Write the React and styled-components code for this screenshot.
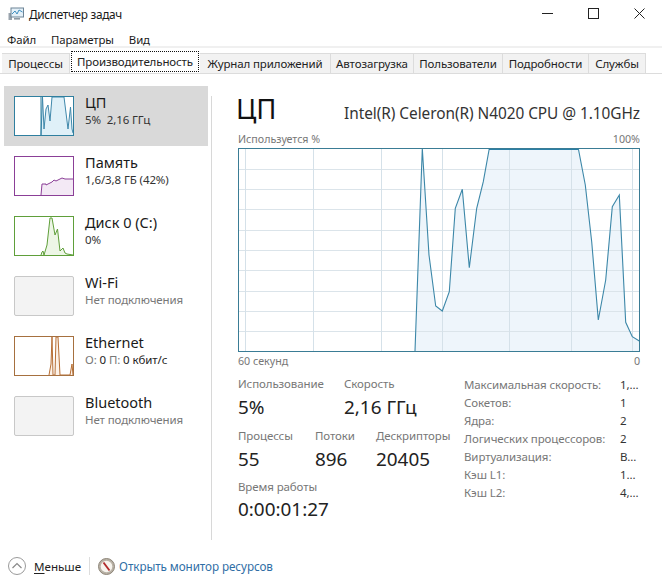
import React from 'react'
import styled, { createGlobalStyle } from 'styled-components'

const GlobalStyle = createGlobalStyle`
  html, body { margin: 0; padding: 0; background: #fff; }
  body { font-family: "Noto Sans", "Open Sans", sans-serif; color: #1a1a1a; overflow: hidden; }
`

const Win = styled.div`
  width: 662px;
  height: 587px;
  display: flex;
  flex-direction: column;
  overflow: hidden;
`
const TitleBar = styled.div`
  height: 29px;
  box-sizing: border-box;
  padding: 0 0 2px 8px;
  display: flex;
  align-items: center;
  font-size: 11.8px;
  letter-spacing: -0.3px;
`
const TitleText = styled.span`
  margin-left: 5px;
  flex: 1;
`
const WinBtn = styled.div`
  width: 46px;
  height: 27px;
  display: flex;
  align-items: center;
  justify-content: center;
`
const MenuBar = styled.div`
  height: 19px;
  box-sizing: border-box;
  padding: 3px 0 0 7px;
  display: flex;
  gap: 15px;
  align-items: center;
  font-size: 11.4px;
  letter-spacing: -0.1px;
  border-bottom: 2px solid #f0f0f0;
`
const TabStrip = styled.div`
  margin-top: 5px;
  height: 20px;
  padding-left: 2px;
  display: flex;
  align-items: flex-end;
  border-bottom: 1px solid #dcdcdc;
`
const Tab = styled.div`
  width: ${p => p.$w}px;
  height: ${p => (p.$active ? 21 : 20)}px;
  box-sizing: border-box;
  display: flex;
  align-items: center;
  justify-content: center;
  font-size: 11.5px;
  letter-spacing: -0.12px;
  white-space: nowrap;
  background: ${p => (p.$active ? '#fff' : '#f2f2f2')};
  border: 1px solid #dcdcdc;
  border-left-width: ${p => (p.$active ? 1 : 0)}px;
  border-bottom: none;
  color: #222;
  ${p => p.$active && 'border: 1px dotted #111; margin: 0 1px 1px; height: 21px;'}
`
const Body = styled.div`
  flex: 1;
  display: flex;
  padding: 12px 0 0 4px;
  min-height: 0;
`
const Side = styled.div`
  width: 204px;
  display: flex;
  flex-direction: column;
`
const SideRow = styled.div`
  height: 60px;
  display: flex;
  align-items: center;
  padding-left: 10px;
  gap: 11px;
  background: ${p => (p.$active ? '#d9d9d9' : 'transparent')};
`
const Thumb = styled.div`
  width: 60px;
  height: 40px;
  box-sizing: border-box;
  background: ${p => (p.$off ? '#f3f3f3' : '#fff')};
  border: 1px solid ${p => p.$color};
  border-radius: ${p => (p.$off ? 2 : 0)}px;
  overflow: hidden;
  flex: none;
`
const ThumbSvg = styled.svg`
  display: block;
  width: 58px;
  height: 38px;
`
const SideText = styled.div`
  display: flex;
  flex-direction: column;
  margin-top: -13px;
`
const SideName = styled.div`
  font-size: 14.5px;
  line-height: 19px;
  color: #1a1a1a;
`
const SideSub = styled.div`
  font-size: 11.5px;
  line-height: 15px;
  letter-spacing: -0.1px;
  color: ${p => (p.$grey ? '#777' : '#333')};
  b { font-weight: 400; color: #222; }
  i { font-style: normal; color: #777; }
`
const Divider = styled.div`
  width: 1px;
  margin: 10px 26px 0 3px;
  height: 444px;
  background: #d8d8d8;
`
const Main = styled.div`
  width: 402px;
  display: flex;
  flex-direction: column;
`
const Heading = styled.div`
  display: flex;
  justify-content: space-between;
  align-items: baseline;
  height: 46px;
`
const BigTitle = styled.div`
  font-size: 27.5px;
  line-height: 44px;
  margin: 1px 0 0 -2px;
  color: #111;
`
const CpuName = styled.div`
  font-size: 15.4px;
  letter-spacing: -0.05px;
  color: #333;
`
const AxisRow = styled.div`
  display: flex;
  justify-content: space-between;
  font-size: 10.7px;
  line-height: 14px;
  color: #777;
`
const GraphSvg = styled.svg`
  display: block;
  width: 402px;
  height: 204px;
  margin: 2px 0 2px;
`
const Stats = styled.div`
  display: flex;
  margin-top: 8px;
`
const StatsLeft = styled.div`
  width: 226px;
`
const StatRow = styled.div`
  display: flex;
  height: ${p => p.$h || 52}px;
`
const Stat = styled.div`
  width: ${p => p.$w}px;
  white-space: nowrap;
`
const StatLabel = styled.div`
  font-size: 11.5px;
  line-height: 16px;
  letter-spacing: -0.1px;
  color: #777;
`
const StatValue = styled.div`
  font-size: 18.9px;
  line-height: ${p => p.$lh || 31}px;
  color: #222;
`
const Specs = styled.div`
  flex: 1;
  display: grid;
  grid-template-columns: 156px 1fr;
  grid-auto-rows: 18px;
  align-self: start;
  padding-top: 1px;
  font-size: 11.5px;
  line-height: 16px;
  letter-spacing: -0.1px;
  color: #777;
  span:nth-child(even) { color: #333; }
`
const Footer = styled.div`
  height: 47px;
  box-sizing: border-box;
  padding: 5px 0 0 8px;
  display: flex;
  align-items: center;
  font-size: 11.6px;
`
const LessLabel = styled.span`
  margin-left: 8px;
  color: #222;
  u { text-underline-offset: 2px; }
`
const FootSep = styled.div`
  width: 1px;
  height: 18px;
  margin: 0 8px;
  background: #ddd;
`
const ResLink = styled.a`
  margin-left: 4px;
  font-size: 11.7px;
  letter-spacing: -0.08px;
  color: #2f6ea5;
`

const tabs = [
  ['Процессы', 68],
  ['Производительность', 130, true],
  ['Журнал приложений', 131],
  ['Автозагрузка', 83],
  ['Пользователи', 89],
  ['Подробности', 86],
  ['Службы', 57],
]

const thumbs = {
  cpu: { color: '#2f7f9f', fill: '#dff0f8', line: '#3f88ab', divider: 26,
    pts: '26,38 27.5,0 29,32 31,12 33,8 35,24 37,0 49,0 53,32 55.5,10 57,32 58,36' },
  mem: { color: '#8b3f97', fill: '#f3e9f5', line: '#8b3f97',
    pts: '26,38 27,27 31,27 31,28 37,25 39,23 41,24 47,21 50,22 58,22' },
  disk: { color: '#5f9f3a', fill: '#edf6e6', line: '#5f9f3a',
    pts: '26,38 27,35 28,34 29,38 32,28 35,1 37,1 40,18 42.5,12 45,34 48,31 50,36 52,37 58,38' },
  eth: { color: '#a6703f', fill: '#fdf2e8', line: '#b76e35',
    pts: '34,38 36,27 37,0 38,38 40,38 41,0 43,0 45,38 55,38 57,27 58,38' },
}

function Spark({ kind }) {
  const t = thumbs[kind]
  return (
    <Thumb $color={t.color}>
      <ThumbSvg viewBox="0 0 58 38">
        <polygon points={`${t.pts} 58,38`} fill={t.fill} />
        <polyline points={t.pts} fill="none" stroke={t.line} strokeWidth="1" />
        {t.divider && <line x1={t.divider} x2={t.divider} y1="0" y2="38" stroke={t.color} strokeWidth="1" />}
      </ThumbSvg>
    </Thumb>
  )
}

// координаты графика снял со скриншота
const cpuLine = [
  [177, 203], [184.3, 0.5], [191, 107], [197.7, 158], [204.3, 163], [211.3, 143.7], [217.3, 60.3],
  [224.3, 41.3], [231.3, 119.7], [238.7, 60.3], [245.3, 33.7], [251.3, 0.5], [340.3, 0.5], [347.3, 37],
  [353.7, 93.7], [360.3, 172], [367.7, 132], [374.3, 58.7], [381.3, 47], [387.7, 174.3], [394.3, 188.7], [401.3, 193],
]
const hGrid = [21.5, 41.5, 61.5, 82.5, 102.5, 122.5, 143.5, 163.5, 183.5]
const vGrid = [7.5, 75.5, 143.5, 204.5, 271.5, 333.5, 394.5]

function CpuGraph() {
  const pts = cpuLine.map(p => p.join(',')).join(' ')
  return (
    <GraphSvg viewBox="0 0 402 204">
      <polygon points={`${pts} 401.3,203`} fill="#eef5fb" />
      {hGrid.map(y => <line key={y} x1="1" x2="401" y1={y} y2={y} stroke="#dbe4ea" />)}
      {vGrid.map(x => <line key={x} x1={x} x2={x} y1="1" y2="203" stroke="#d5e1e9" />)}
      <polyline points={pts} fill="none" stroke="#3c87a8" strokeWidth="1.1" />
      <line x1="251" x2="340" y1="1" y2="1" stroke="#2a7fa6" strokeWidth="2" />
      <rect x="0.5" y="0.5" width="401" height="203" fill="none" stroke="#3a7c95" />
    </GraphSvg>
  )
}

function AppIcon() {
  return (
    <svg width="16" height="16" viewBox="0 0 16 16">
      <rect x="0.5" y="7" width="3.5" height="7" fill="#9aa4ad" />
      <rect x="3" y="2" width="12.5" height="9" fill="#e4f0f8" stroke="#6d8496" />
      <polyline points="4,8 7,5 9,8 11,4 14.5,6" fill="none" stroke="#3f8fc0" />
      <rect x="6" y="12" width="6" height="1.6" fill="#8d99a3" />
    </svg>
  )
}

export default function App() {
  return (
    <Win>
      <GlobalStyle />
      <TitleBar>
        <AppIcon />
        <TitleText>Диспетчер задач</TitleText>
        <WinBtn>
          <svg width="11" height="11" viewBox="0 0 11 11"><line x1="0" x2="11" y1="5.5" y2="5.5" stroke="#222" /></svg>
        </WinBtn>
        <WinBtn>
          <svg width="11" height="11" viewBox="0 0 11 11"><rect x="0.5" y="0.5" width="10" height="10" fill="none" stroke="#222" /></svg>
        </WinBtn>
        <WinBtn>
          <svg width="11" height="11" viewBox="0 0 11 11"><path d="M0.5 0.5 L10.5 10.5 M10.5 0.5 L0.5 10.5" stroke="#222" fill="none" /></svg>
        </WinBtn>
      </TitleBar>
      <MenuBar>
        <span>Файл</span>
        <span>Параметры</span>
        <span>Вид</span>
      </MenuBar>
      <TabStrip>
        {tabs.map(([name, w, active]) => (
          <Tab key={name} $w={active ? w - 2 : w} $active={active}>{name}</Tab>
        ))}
      </TabStrip>
      <Body>
        <Side>
          <SideRow $active>
            <Spark kind="cpu" />
            <SideText><SideName>ЦП</SideName><SideSub>5%&nbsp; 2,16 ГГц</SideSub></SideText>
          </SideRow>
          <SideRow>
            <Spark kind="mem" />
            <SideText><SideName>Память</SideName><SideSub>1,6/3,8 ГБ (42%)</SideSub></SideText>
          </SideRow>
          <SideRow>
            <Spark kind="disk" />
            <SideText><SideName>Диск 0 (C:)</SideName><SideSub>0%</SideSub></SideText>
          </SideRow>
          <SideRow>
            <Thumb $off $color="#c8c8c8" />
            <SideText><SideName>Wi-Fi</SideName><SideSub $grey>Нет подключения</SideSub></SideText>
          </SideRow>
          <SideRow>
            <Spark kind="eth" />
            <SideText><SideName>Ethernet</SideName><SideSub><i>О:</i> <b>0</b> <i>П:</i> <b>0 кбит/с</b></SideSub></SideText>
          </SideRow>
          <SideRow>
            <Thumb $off $color="#c8c8c8" />
            <SideText><SideName>Bluetooth</SideName><SideSub $grey>Нет подключения</SideSub></SideText>
          </SideRow>
        </Side>
        <Divider />
        <Main>
          <Heading>
            <BigTitle>ЦП</BigTitle>
            <CpuName>Intel(R) Celeron(R) N4020 CPU @ 1.10GHz</CpuName>
          </Heading>
          <AxisRow><span>Используется %</span><span>100%</span></AxisRow>
          <CpuGraph />
          <AxisRow><span>60 секунд</span><span>0</span></AxisRow>
          <Stats>
            <StatsLeft>
              <StatRow>
                <Stat $w={106}><StatLabel>Использование</StatLabel><StatValue>5%</StatValue></Stat>
                <Stat $w={120}><StatLabel>Скорость</StatLabel><StatValue>2,16 ГГц</StatValue></Stat>
              </StatRow>
              <StatRow $h={51}>
                <Stat $w={77}><StatLabel>Процессы</StatLabel><StatValue>55</StatValue></Stat>
                <Stat $w={61}><StatLabel>Потоки</StatLabel><StatValue>896</StatValue></Stat>
                <Stat $w={88}><StatLabel>Дескрипторы</StatLabel><StatValue>20405</StatValue></Stat>
              </StatRow>
              <StatRow>
                <Stat $w={200}><StatLabel>Время работы</StatLabel><StatValue $lh={29}>0:00:01:27</StatValue></Stat>
              </StatRow>
            </StatsLeft>
            <Specs>
              <span>Максимальная скорость:</span><span>1,...</span>
              <span>Сокетов:</span><span>1</span>
              <span>Ядра:</span><span>2</span>
              <span>Логических процессоров:</span><span>2</span>
              <span>Виртуализация:</span><span>В...</span>
              <span>Кэш L1:</span><span>1...</span>
              <span>Кэш L2:</span><span>4,...</span>
            </Specs>
          </Stats>
        </Main>
      </Body>
      <Footer>
        <svg width="18" height="18" viewBox="0 0 18 18">
          <circle cx="9" cy="9" r="8.5" fill="#fff" stroke="#9a9a9a" />
          <polyline points="4.5,11 9,6.5 13.5,11" fill="none" stroke="#8a8a8a" strokeWidth="1.2" />
        </svg>
        <LessLabel><u>М</u>еньше</LessLabel>
        <FootSep />
        <svg width="17" height="17" viewBox="0 0 17 17">
          <circle cx="8.5" cy="8.5" r="8" fill="#b9b2a6" stroke="#8d8578" />
          <circle cx="8.5" cy="8.5" r="5.8" fill="#f7f4ee" />
          <line x1="5.5" y1="4.5" x2="11.5" y2="12.5" stroke="#b02a2a" strokeWidth="1.8" />
        </svg>
        <ResLink>Открыть монитор ресурсов</ResLink>
      </Footer>
    </Win>
  )
}
